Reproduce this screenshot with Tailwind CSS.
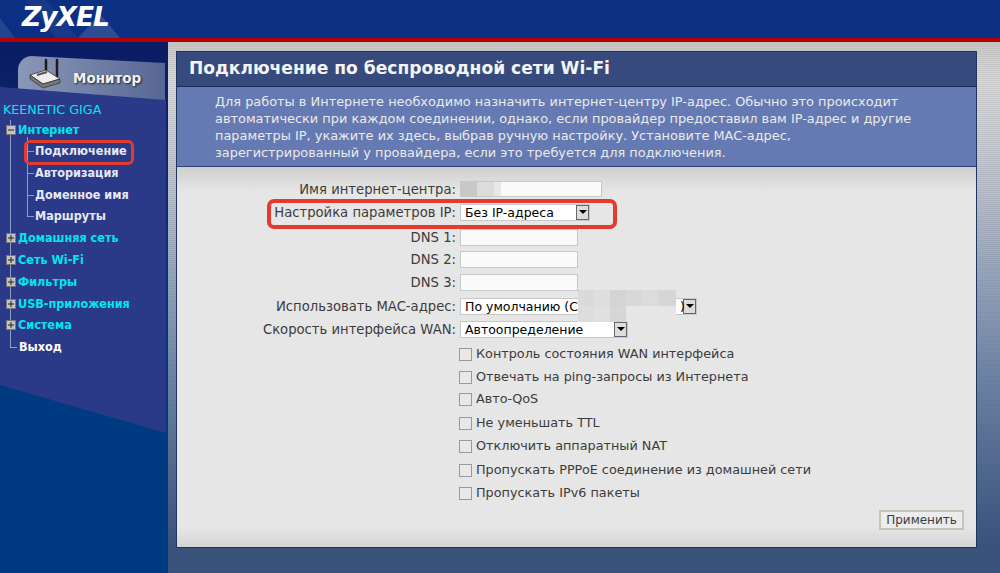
<!DOCTYPE html>
<html lang="ru">
<head>
    <meta charset="UTF-8">
    <title>ZyXEL Keenetic Giga</title>
    <script src="https://cdn.jsdelivr.net/npm/@tailwindcss/browser@4"></script>
</head>
<body class="w-[1000px] h-[573px] overflow-hidden bg-[#3b5580] font-['DejaVu_Sans',sans-serif] text-[12.8px] text-[#3c3c3c]">

    <!-- header -->
    <header class="relative h-[42px] bg-[#0b2f82] border-b-[4px] border-[#b40000] overflow-hidden">
        <svg class="absolute left-0 top-0" width="140" height="38" viewBox="0 0 140 38">
            <path d="M0 18L15 38H0Z" fill="#fff" fill-opacity=".1"/>
            <path d="M78 38L100 14L120 38Z" fill="#fff" fill-opacity=".14"/>
            <path d="M26 0L56 38H78L46 0Z" fill="#fff" fill-opacity=".05"/>
        </svg>
        <span class="absolute left-[22px] top-0 text-[26.5px] leading-[34px] font-bold italic tracking-[-1px] text-white">ZyXEL</span>
    </header>

    <div class="flex h-[531px]">
        <!-- sidebar -->
        <aside class="relative w-[168px] shrink-0 bg-[linear-gradient(to_bottom,#0a1c63_0,#0d2a72_150px,#003a80_340px)] font-bold font-['DejaVu_Sans_Condensed','DejaVu_Sans',sans-serif] text-[12.5px]">
            <div class="absolute left-[18px] top-[14px] w-[147px] h-[44px] rounded-tl-[14px] bg-[linear-gradient(to_right,#8a97b6,#6d7ba2_60%,#566594)] [clip-path:polygon(0_0,12px_0,100%_7px,100%_100%,0_100%)] pl-[55px] pt-[12px] text-[13.5px] font-['DejaVu_Sans',sans-serif] text-[#f2f2f2] [text-shadow:1px_1px_2px_#222]">Монитор</div>
            <svg class="absolute left-[28px] top-[16px]" width="34" height="32" viewBox="0 0 34 32">
                <path d="M18 2v12M29 2v16" stroke="#1c1c1c" stroke-width="2.5" fill="none" stroke-linecap="round"/>
                <path d="M2 17L18 12L32 21L15 26Z" fill="#ececec" stroke="#333" stroke-width=".8"/>
                <path d="M2 17v4L15 30L32 25v-4L15 26Z" fill="#777" stroke="#222" stroke-width=".6"/>
                <path d="M9 17L19 14" stroke="#555" stroke-width="2"/>
            </svg>
            <nav class="absolute left-0 top-[45px] w-[166px] h-[346px] bg-[#2b3a88] [clip-path:polygon(0_0,100%_13px,100%_100%,0_298px)] pt-[13px]">
                <div class="absolute left-[10px] top-[33px] w-px h-[227px] bg-[#8f9bc4]"></div>
                <div class="absolute left-[27px] top-[50px] w-px h-[80px] bg-[#8f9bc4]"></div>

                <div class="h-[19px] leading-[19px] pl-[3px] text-[12.7px] text-[#00e6f0] font-normal font-['DejaVu_Sans',sans-serif]">KEENETIC GIGA</div>
                <div class="relative h-[21px] leading-[21px] pl-[18px] text-[#00e6f0]"><svg class="absolute left-[6px] top-[6px]" width="10" height="10" viewBox="0 0 10 10"><rect x=".5" y=".5" width="9" height="9" fill="#c4c4c4" stroke="#777"/><path d="M2 5h6" stroke="#222"/></svg>Интернет</div>
                <div class="relative h-[21.8px] leading-[21.8px] pl-[35px] text-[#e6e8f5]"><span class="absolute left-[28px] top-[11px] w-[6px] h-px bg-[#8f9bc4]"></span>Подключение<span class="absolute left-[24px] top-0 w-[110px] h-[25px] rounded-[6px] border-[3px] border-[#e53a2e]"></span></div>
                <div class="relative h-[21.8px] leading-[21.8px] pl-[35px] text-[#e6e8f5]"><span class="absolute left-[28px] top-[11px] w-[6px] h-px bg-[#8f9bc4]"></span>Авторизация</div>
                <div class="relative h-[21.8px] leading-[21.8px] pl-[35px] text-[#e6e8f5]"><span class="absolute left-[28px] top-[11px] w-[6px] h-px bg-[#8f9bc4]"></span>Доменное имя</div>
                <div class="relative h-[21.8px] leading-[21.8px] pl-[35px] text-[#e6e8f5]"><span class="absolute left-[28px] top-[11px] w-[6px] h-px bg-[#8f9bc4]"></span>Маршруты</div>
                <div class="relative h-[21.8px] leading-[21.8px] pl-[18px] text-[#00e6f0]"><svg class="absolute left-[6px] top-[6px]" width="10" height="10" viewBox="0 0 10 10"><rect x=".5" y=".5" width="9" height="9" fill="#c4c4c4" stroke="#777"/><path d="M2 5h6M5 2v6" stroke="#222"/></svg>Домашняя сеть</div>
                <div class="relative h-[21.8px] leading-[21.8px] pl-[18px] text-[#00e6f0]"><svg class="absolute left-[6px] top-[6px]" width="10" height="10" viewBox="0 0 10 10"><rect x=".5" y=".5" width="9" height="9" fill="#c4c4c4" stroke="#777"/><path d="M2 5h6M5 2v6" stroke="#222"/></svg>Сеть Wi-Fi</div>
                <div class="relative h-[21.8px] leading-[21.8px] pl-[18px] text-[#00e6f0]"><svg class="absolute left-[6px] top-[6px]" width="10" height="10" viewBox="0 0 10 10"><rect x=".5" y=".5" width="9" height="9" fill="#c4c4c4" stroke="#777"/><path d="M2 5h6M5 2v6" stroke="#222"/></svg>Фильтры</div>
                <div class="relative h-[21.8px] leading-[21.8px] pl-[18px] text-[#00e6f0]"><svg class="absolute left-[6px] top-[6px]" width="10" height="10" viewBox="0 0 10 10"><rect x=".5" y=".5" width="9" height="9" fill="#c4c4c4" stroke="#777"/><path d="M2 5h6M5 2v6" stroke="#222"/></svg>USB-приложения</div>
                <div class="relative h-[21.8px] leading-[21.8px] pl-[18px] text-[#00e6f0]"><svg class="absolute left-[6px] top-[6px]" width="10" height="10" viewBox="0 0 10 10"><rect x=".5" y=".5" width="9" height="9" fill="#c4c4c4" stroke="#777"/><path d="M2 5h6M5 2v6" stroke="#222"/></svg>Система</div>
                <div class="relative h-[21.8px] leading-[21.8px] pl-[19px] text-white"><span class="absolute left-[10px] top-[11px] w-[7px] h-px bg-[#8f9bc4]"></span>Выход</div>
            </nav>
        </aside>

        <!-- content -->
        <main class="flex-1 h-full bg-[repeating-linear-gradient(to_bottom,rgba(0,0,0,.05)_0,rgba(0,0,0,.05)_1px,transparent_1px,transparent_2px),linear-gradient(to_bottom,#c8c8c8_0,#d8d8d8_40px,#b8bfcc_150px,#6f86a8_330px,#3b5580_500px)] pl-[8px] pr-[23px] pt-[9px]">
            <div class="w-[801px] h-[497px] border border-[#1f3560] flex flex-col">
                <h1 class="h-[35px] shrink-0 bg-[#364a7d] border-b border-[#1a2c58] pl-[12px] leading-[33px] text-[17.1px] font-bold text-[#f4f4f4]">Подключение по беспроводной сети Wi-Fi</h1>
                <p class="h-[80px] shrink-0 bg-[#657ab2] border-b border-[#2c4270] pl-[38px] pt-[6px] leading-[17px] text-[12.9px] text-[#eaeaea]">Для работы в Интернете необходимо назначить интернет-центру IP-адрес. Обычно это происходит<br>автоматически при каждом соединении, однако, если провайдер предоставил вам IP-адрес и другие<br>параметры IP, укажите их здесь, выбрав ручную настройку. Установите MAC-адрес,<br>зарегистрированный у провайдера, если это требуется для подключения.</p>

                <form class="relative flex-1 bg-[linear-gradient(to_bottom,#cfcfcf_0,#e6e6e6_25px,#e6e6e6_360px,#d4d4d4_100%)] pt-[11px]">
                    <div class="flex items-center h-[22px]"><label class="w-[279px] mt-[2px] text-right text-[13.2px]">Имя интернет-центра:</label>
                        <span class="ml-[4px] w-[142px] h-[16px] border border-[#c8c8c8] bg-[linear-gradient(to_right,#c8c8c8_0,#c8c8c8_16px,#dcdcdc_16px,#dcdcdc_33px,#e8e8e8_33px,#e8e8e8_40px,#fafafa_40px)]"></span></div>
                    <div class="flex items-center h-[22px] mt-[1px]"><label class="w-[279px] mt-[2px] text-right text-[13.2px]">Настройка параметров IP:</label>
                        <span class="ml-[4px] w-[130px] h-[17px] bg-white border border-[#c8c8c8] flex justify-between text-[12.5px] text-black"><span class="pl-[4px] leading-[15px]">Без IP-адреса</span><span class="w-[13px] h-full bg-[#ddd] border border-[#666] flex items-center justify-center"><span class="border-x-[4px] border-x-transparent border-t-[4px] border-t-black"></span></span></span></div>
                    <div class="flex items-center h-[22px] mt-[3px]"><label class="w-[279px] mt-[2px] text-right text-[13.2px]">DNS 1:</label><span class="ml-[4px] w-[118px] h-[17px] bg-[#fafafa] border border-[#c8c8c8]"></span></div>
                    <div class="flex items-center h-[22px]"><label class="w-[279px] mt-[2px] text-right text-[13.2px]">DNS 2:</label><span class="ml-[4px] w-[118px] h-[17px] bg-[#fafafa] border border-[#c8c8c8]"></span></div>
                    <div class="flex items-center h-[22px] mt-[1px]"><label class="w-[279px] mt-[2px] text-right text-[13.2px]">DNS 3:</label><span class="ml-[4px] w-[118px] h-[17px] bg-[#fafafa] border border-[#c8c8c8]"></span></div>
                    <div class="flex items-center h-[22px] mt-[2px]"><label class="w-[279px] mt-[2px] text-right text-[13.2px]">Использовать MAC-адрес:</label>
                        <span class="relative ml-[4px] w-[237px] h-[17px] bg-white border border-[#c8c8c8] flex justify-between text-[12.5px] text-black"><span class="pl-[4px] leading-[15px]">По умолчанию (С</span>
                            <span class="absolute left-[117px] top-[-9px] w-[98px] h-[32px] flex flex-col">
                                <span class="h-[16px] bg-[linear-gradient(to_right,#dadada_0,#dadada_16px,#dedede_16px,#dedede_32px,#d4d4d4_32px,#d4d4d4_48px,#d8d8d8_48px,#d8d8d8_64px,#dcdcdc_64px,#dcdcdc_80px,#d6d6d6_80px)]"></span>
                                <span class="h-[16px] bg-[linear-gradient(to_right,#dddddd_0,#dddddd_16px,#e0e0e0_16px,#e0e0e0_32px,#d6d6d6_32px,#d6d6d6_48px,#e6e6e6_48px)]"></span>
                            </span>
                            <span class="absolute left-[219px] leading-[15px]">)</span><span class="w-[13px] h-full bg-[#ddd] border border-[#666] flex items-center justify-center"><span class="border-x-[4px] border-x-transparent border-t-[4px] border-t-black"></span></span></span></div>
                    <div class="flex items-center h-[22px] mt-[1px]"><label class="w-[279px] mt-[2px] text-right text-[13.2px]">Скорость интерфейса WAN:</label>
                        <span class="ml-[4px] w-[168px] h-[17px] bg-white border border-[#c8c8c8] flex justify-between text-[12.5px] text-black"><span class="pl-[4px] leading-[15px]">Автоопределение</span><span class="w-[13px] h-full bg-[#ddd] border border-[#666] flex items-center justify-center"><span class="border-x-[4px] border-x-transparent border-t-[4px] border-t-black"></span></span></span></div>

                    <div class="flex items-center h-[22px] mt-[3px] pl-[282px] gap-[4px]"><span class="w-[13px] h-[13px] bg-[#e8e8e8] border border-[#9a9a9a]"></span>Контроль состояния WAN интерфейса</div>
                    <div class="flex items-center h-[22px] mt-[1px] pl-[282px] gap-[4px]"><span class="w-[13px] h-[13px] bg-[#e8e8e8] border border-[#9a9a9a]"></span>Отвечать на ping-запросы из Интернета</div>
                    <div class="flex items-center h-[22px] pl-[282px] gap-[4px]"><span class="w-[13px] h-[13px] bg-[#e8e8e8] border border-[#9a9a9a]"></span>Авто-QoS</div>
                    <div class="flex items-center h-[22px] mt-[2px] pl-[282px] gap-[4px]"><span class="w-[13px] h-[13px] bg-[#e8e8e8] border border-[#9a9a9a]"></span>Не уменьшать TTL</div>
                    <div class="flex items-center h-[22px] mt-[1px] pl-[282px] gap-[4px]"><span class="w-[13px] h-[13px] bg-[#e8e8e8] border border-[#9a9a9a]"></span>Отключить аппаратный NAT</div>
                    <div class="flex items-center h-[22px] mt-[2px] pl-[282px] gap-[4px]"><span class="w-[13px] h-[13px] bg-[#e8e8e8] border border-[#9a9a9a]"></span>Пропускать PPPoE соединение из домашней сети</div>
                    <div class="flex items-center h-[22px] mt-[1px] pl-[282px] gap-[4px]"><span class="w-[13px] h-[13px] bg-[#e8e8e8] border border-[#9a9a9a]"></span>Пропускать IPv6 пакеты</div>

                    <div class="flex justify-end pr-[12px] mt-[6px]">
                        <button type="button" class="w-[85px] h-[20px] bg-[#ececec] border-2 border-[#c4c4b8] text-[12px] leading-none">Применить</button>
                    </div>

                    <!-- red highlight over the IP row -->
                    <div class="absolute left-[90px] top-[32px] w-[350px] h-[30px] rounded-[7px] border-[4px] border-[#e53a2e]"></div>
                </form>
            </div>
        </main>
    </div>
</body>
</html>
